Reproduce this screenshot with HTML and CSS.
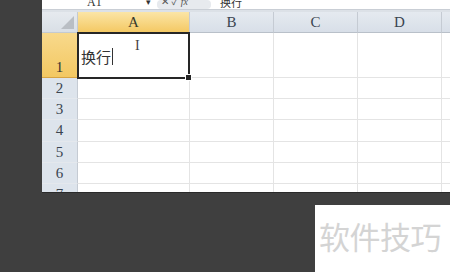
FILE: index.html
```html
<!DOCTYPE html>
<html>
<head>
	<title>换行</title>
	<link rel="stylesheet" href="styles.css">
</head>
<body>
	<div class="sheet">
		<div class="formula-bar">
			<span class="name-box">A1</span>
			<span class="drop">&#9662;</span>
			<span class="fx-group">&#10005; &#10003; <i>fx</i></span>
			<span class="formula">换行</span>
		</div>
		<div class="grid">
			<div class="corner"><span class="tri"></span></div>
			<div class="col-head active">A</div>
			<div class="col-head">B</div>
			<div class="col-head">C</div>
			<div class="col-head">D</div>
			<div class="col-head"></div>

			<div class="row-head active tall">1</div>
			<div class="cell selected">
				<span class="entry">换行<span class="caret"></span></span>
				<span class="ibeam">I</span>
				<span class="handle"></span>
			</div>
			<div class="cell"></div><div class="cell"></div><div class="cell"></div><div class="cell"></div>

			<div class="row-head">2</div>
			<div class="cell"></div><div class="cell"></div><div class="cell"></div><div class="cell"></div><div class="cell"></div>
			<div class="row-head">3</div>
			<div class="cell"></div><div class="cell"></div><div class="cell"></div><div class="cell"></div><div class="cell"></div>
			<div class="row-head">4</div>
			<div class="cell"></div><div class="cell"></div><div class="cell"></div><div class="cell"></div><div class="cell"></div>
			<div class="row-head">5</div>
			<div class="cell"></div><div class="cell"></div><div class="cell"></div><div class="cell"></div><div class="cell"></div>
			<div class="row-head">6</div>
			<div class="cell"></div><div class="cell"></div><div class="cell"></div><div class="cell"></div><div class="cell"></div>
			<div class="row-head">7</div>
			<div class="cell"></div><div class="cell"></div><div class="cell"></div><div class="cell"></div><div class="cell"></div>
		</div>
	</div>
	<div class="footer">
		<div class="brand">软件技巧</div>
	</div>
</body>
</html>
```

FILE: styles.css
```css
body{
	margin: 0;
	width: 450px;
	height: 272px;
	overflow: hidden;
	background: #3f3f3f;
	font-family: "Liberation Serif", "Noto Sans CJK SC", serif;
}
.sheet{
	margin-left: 42px;
	height: 193px;
	background: #dce1e7;
	overflow: hidden;
	border-bottom: 1px solid #2a2a2a;
	box-sizing: border-box;
}
.formula-bar{
	height: 9px;
	background: #fff;
	border-bottom: 1px solid #c9ced5;
	display: flex;
	align-items: flex-start;
	overflow: hidden;
	font-size: 12px;
	line-height: 4px;
	color: #333;
}
.formula-bar span{
	height: 9px;
	display: block;
}
.name-box{
	margin-left: 45px;
	width: 58px;
}
.drop{
	font-size: 9px;
	margin-left: 1px;
}
.fx-group{
	margin-left: 6px;
	width: 50px;
	background: #e7eaee;
	border-radius: 4px;
	color: #555;
	font-size: 10px;
	padding-left: 4px;
}
.formula{
	margin-left: 9px;
	font-family: "Noto Sans CJK SC", sans-serif;
	font-size: 11px;
}
.grid{
	margin-top: 2px;
	display: grid;
	grid-template-columns: 36px 112px 84px 84px 84px 20px;
	grid-template-rows: 21px 45px 21px 21px 22px 21px 21px 21px;
	background: #fff;
}
.corner{
	background: linear-gradient(#e6eaef, #d9dfe6);
	border-right: 1px solid #c4cad1;
	border-bottom: 1px solid #c4cad1;
	position: relative;
}
.tri{
	position: absolute;
	right: 3px;
	bottom: 3px;
	width: 0;
	height: 0;
	border-left: 13px solid transparent;
	border-bottom: 13px solid #b9bec4;
}
.col-head{
	background: linear-gradient(#e5eaf0, #d8dfe8);
	border-right: 1px solid #c5cbd3;
	border-bottom: 1px solid #b9c0c9;
	display: flex;
	align-items: center;
	justify-content: center;
	font-size: 15px;
	color: #3a4450;
}
.col-head.active{
	background: linear-gradient(#fbe5a6, #f4c964);
	border-bottom: 1px solid #e0a93a;
	color: #3a3a2a;
}
.row-head{
	background: #dde4ec;
	border-right: 1px solid #c5cbd3;
	border-bottom: 1px solid #e4e8ed;
	display: flex;
	align-items: center;
	justify-content: center;
	font-size: 15px;
	color: #3a4450;
}
.row-head.active{
	background: linear-gradient(#f8d98c, #f3c862);
	border-bottom: 1px solid #d7a443;
	color: #333;
}
.row-head.tall{
	align-items: flex-end;
	padding-bottom: 1px;
}
.cell{
	border-right: 1px solid #e4e4e4;
	border-bottom: 1px solid #e4e4e4;
}
.cell.selected{
	border: 2px solid #262626;
	margin: -1px 0 -1px -1px;
	position: relative;
	display: flex;
	align-items: center;
	padding-left: 2px;
	padding-top: 2px;
}
.entry{
	font-family: "Noto Sans CJK SC", sans-serif;
	font-size: 15px;
	color: #333;
	display: flex;
	align-items: center;
}
.caret{
	display: inline-block;
	width: 1px;
	height: 17px;
	background: #333;
	margin-left: 1px;
}
.ibeam{
	position: absolute;
	left: 56px;
	top: 4px;
	font-size: 14px;
	color: #444;
}
.handle{
	position: absolute;
	right: -4px;
	bottom: -4px;
	width: 5px;
	height: 5px;
	background: #262626;
	border: 1px solid #fff;
}
.footer{
	margin-top: 12px;
	display: flex;
	justify-content: flex-end;
}
.brand{
	width: 135px;
	height: 67px;
	background: #fff;
	box-sizing: border-box;
	padding-left: 4px;
	padding-top: 13px;
	font-family: "Noto Sans CJK SC", sans-serif;
	font-size: 31px;
	line-height: 36px;
	color: #d4d4d4;
	letter-spacing: -0.5px;
	white-space: nowrap;
}
```
